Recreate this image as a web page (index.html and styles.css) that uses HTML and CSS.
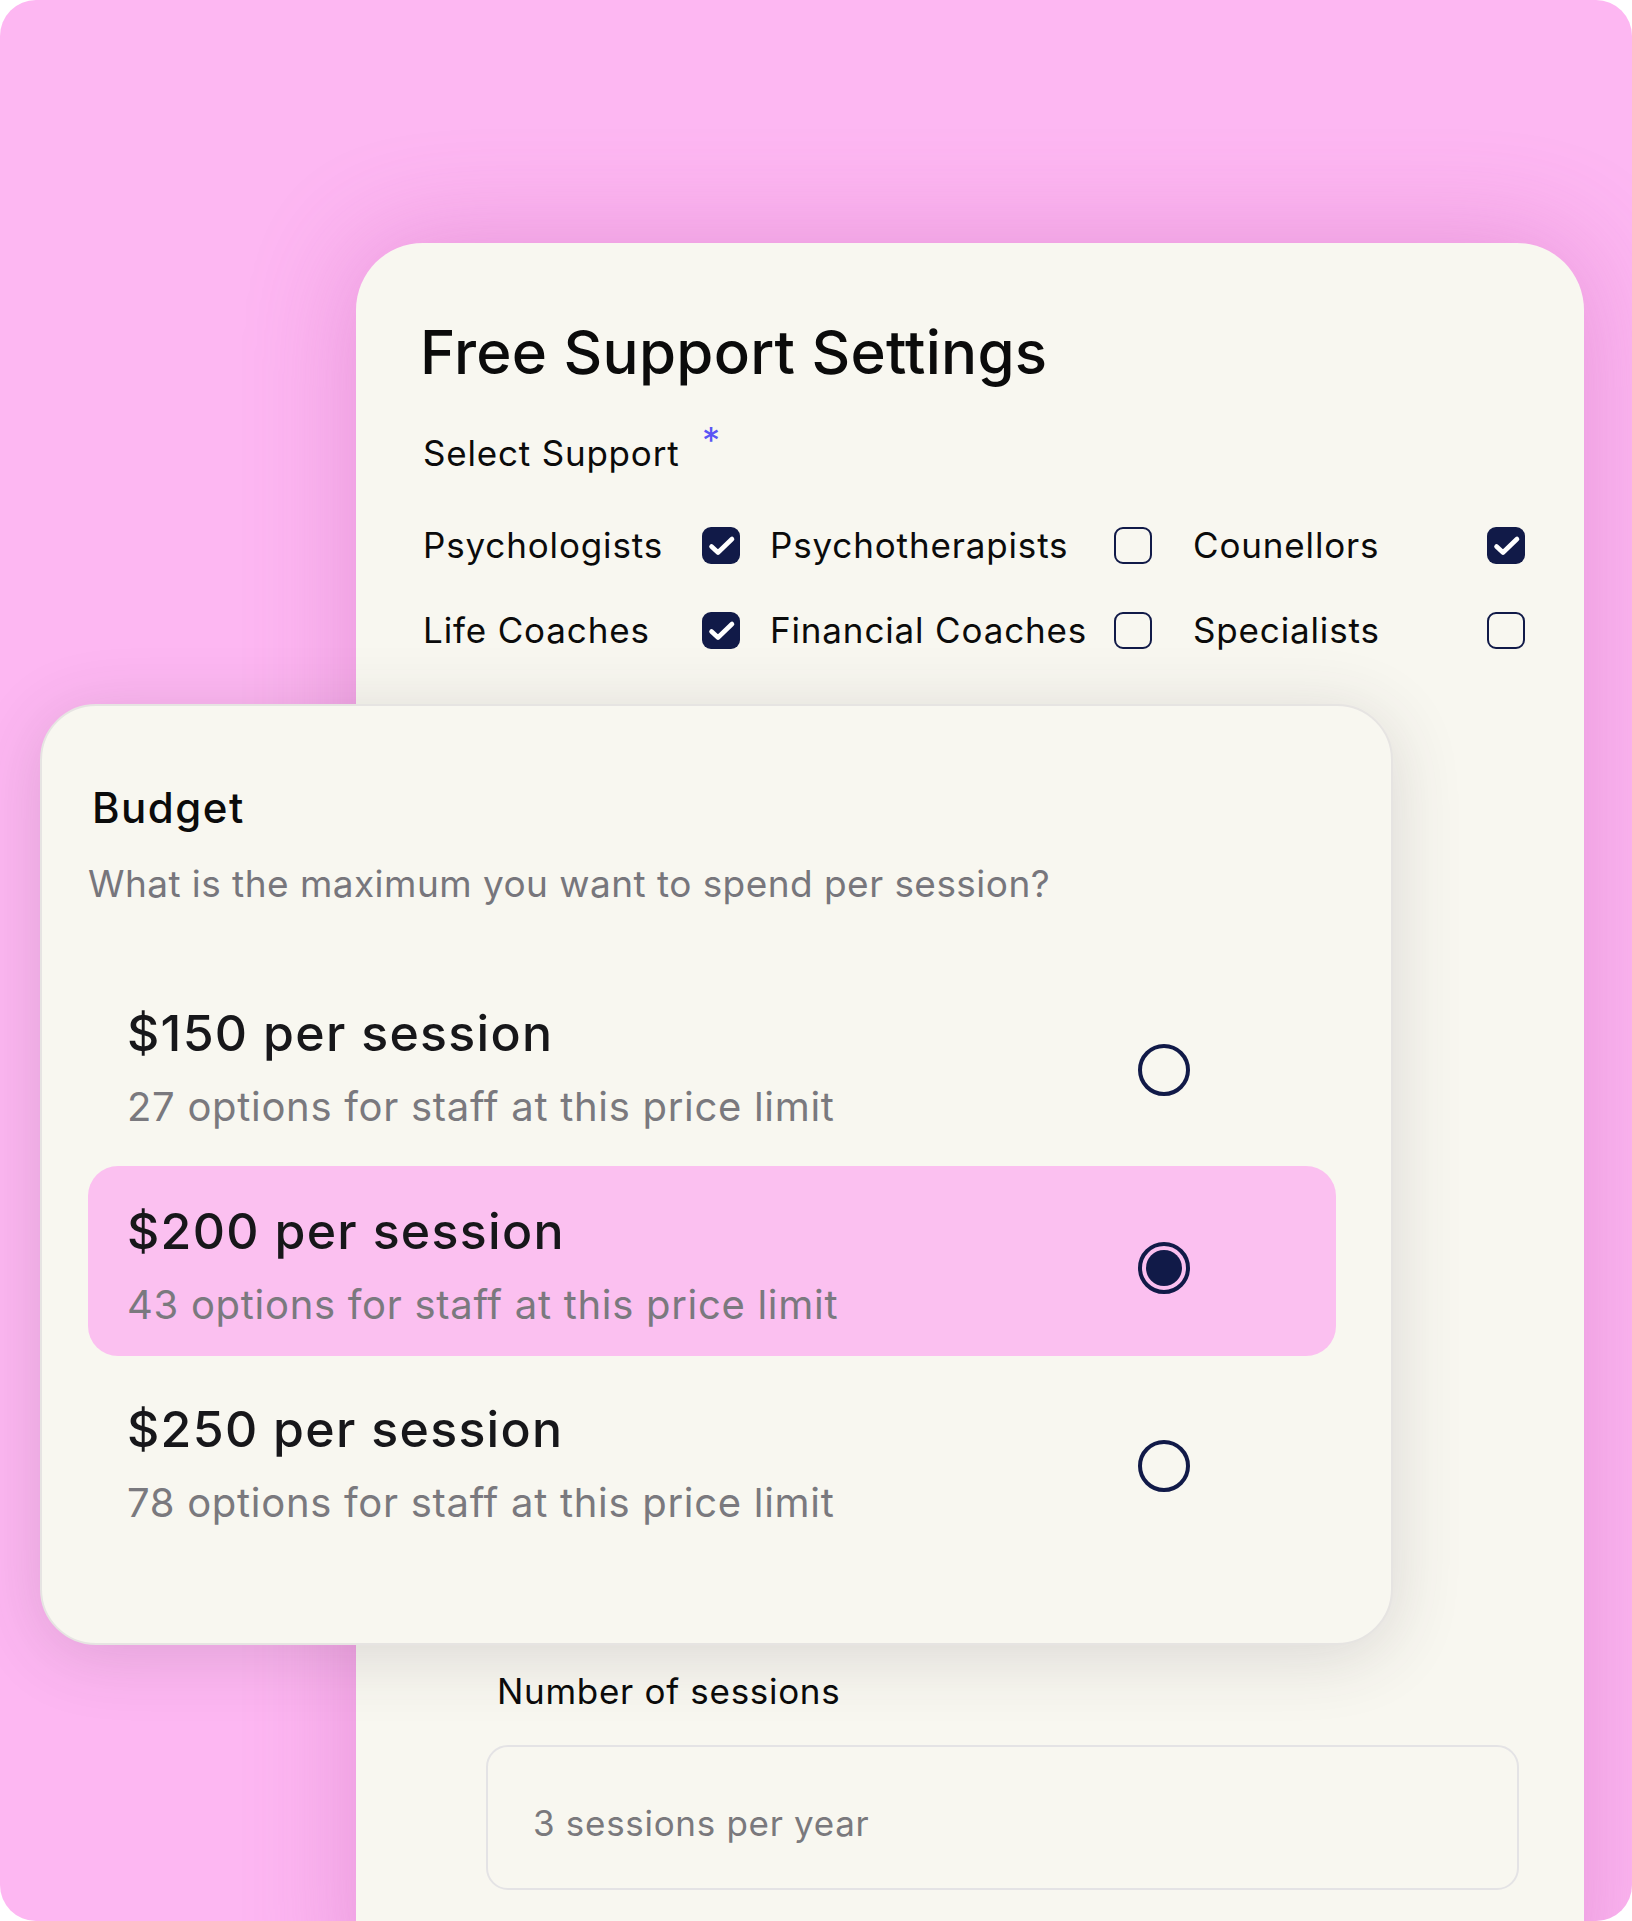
FILE: index.html
```html
<!DOCTYPE html>
<html lang="en">
<head>
    <meta charset="UTF-8">
    <meta name="viewport" content="width=device-width, initial-scale=1.0">
    <title>Free Support Settings</title>
    <link rel="stylesheet" href="styles.css">
</head>
<body>
    <div class="frame">
        <!-- back card: support settings -->
        <section class="settings">
            <h1 class="settings-title">Free Support Settings</h1>
            <div class="field-label">Select Support <span class="req">*</span></div>

            <div class="support-grid">
                <span class="support-name">Psychologists</span>
                <span class="check on"><svg viewBox="0 0 38 37"><path d="M9.5 19.5l6.5 6L30 12"/></svg></span>
                <span class="support-name mid">Psychotherapists</span>
                <span class="check"></span>
                <span class="support-name end">Counellors</span>
                <span class="check on"><svg viewBox="0 0 38 37"><path d="M9.5 19.5l6.5 6L30 12"/></svg></span>

                <span class="support-name">Life Coaches</span>
                <span class="check on"><svg viewBox="0 0 38 37"><path d="M9.5 19.5l6.5 6L30 12"/></svg></span>
                <span class="support-name mid">Financial Coaches</span>
                <span class="check"></span>
                <span class="support-name end">Specialists</span>
                <span class="check"></span>
            </div>

            <div class="sessions">
                <div class="sessions-label">Number of sessions</div>
                <div class="sessions-input">3 sessions per year</div>
            </div>
        </section>

        <!-- front card: budget, lies over the settings card -->
        <section class="budget">
            <h2 class="budget-title">Budget</h2>
            <p class="budget-sub">What is the maximum you want to spend per session?</p>

            <div class="price-list">
                <div class="price">
                    <div class="price-text">
                        <div class="price-name">$150 per session</div>
                        <div class="price-note">27 options for staff at this price limit</div>
                    </div>
                    <span class="radio"></span>
                </div>
                <div class="price selected">
                    <div class="price-text">
                        <div class="price-name">$200 per session</div>
                        <div class="price-note">43 options for staff at this price limit</div>
                    </div>
                    <span class="radio on"></span>
                </div>
                <div class="price">
                    <div class="price-text">
                        <div class="price-name">$250 per session</div>
                        <div class="price-note">78 options for staff at this price limit</div>
                    </div>
                    <span class="radio"></span>
                </div>
            </div>
        </section>
    </div>
</body>
</html>
```

FILE: styles.css
```css
*{
    margin: 0;
    padding: 0;
    box-sizing: border-box;
}
html, body{
    background: #ffffff;
}
body{
    font-family: Inter, "Liberation Sans", sans-serif;
    color: #0b0b0b;
}
.frame{
    position: relative;
    width: 1632px;
    height: 1921px;
    padding: 243px 0 0 356px;
    background: #fdb7f2;
    border-radius: 36px;
    overflow: hidden;
}

/* settings card */
.settings{
    width: 1228px;
    height: 1760px;
    padding: 73px 65px 0 67px;
    background: #f8f7f0;
    border-radius: 67px 67px 0 0;
    box-shadow: 0 0 110px rgba(180, 70, 160, 0.32);
}
.settings-title{
    margin-left: -3px;
    font-size: 60px;
    line-height: 72px;
    font-weight: 500;
    letter-spacing: 0.25px;
}
.field-label{
    margin-top: 45px;
    font-size: 35px;
    line-height: 40px;
    letter-spacing: 0.8px;
}
.req{
    display: inline-block;
    margin-left: 12px;
    color: #5a55f5;
    font-size: 36px;
    line-height: 30px;
    vertical-align: top;
    transform: translateY(-8px);
}
.support-grid{
    display: grid;
    grid-template-columns: 279px 38px 374px 38px 335px 38px;
    grid-auto-rows: 50px;
    row-gap: 35px;
    align-items: center;
    margin-top: 47px;
}
.support-name{
    font-size: 35px;
    line-height: 40px;
    letter-spacing: 0.85px;
}
.support-name.mid{
    padding-left: 30px;
}
.support-name.end{
    padding-left: 41px;
}
.check{
    display: block;
    width: 38px;
    height: 37px;
    border: 2.5px solid #111a48;
    border-radius: 9px;
}
.check.on{
    background: #111a48;
    border: none;
}
.check svg{
    display: block;
    width: 38px;
    height: 37px;
}
.check path{
    fill: none;
    stroke: #ffffff;
    stroke-width: 4.6;
    stroke-linecap: round;
    stroke-linejoin: round;
}
.sessions{
    margin-top: 1016px;
    margin-left: 63px;
}
.sessions-label{
    padding-left: 11px;
    font-size: 35px;
    line-height: 40px;
    letter-spacing: 0.7px;
}
.sessions-input{
    display: flex;
    align-items: center;
    height: 145px;
    margin-top: 34px;
    padding: 11px 0 0 45px;
    border: 2px solid #e4e3e5;
    border-radius: 22px;
    color: #7a797d;
    font-size: 35px;
    line-height: 40px;
    letter-spacing: 0.7px;
}

/* budget card */
.budget{
    position: absolute;
    left: 40px;
    top: 704px;
    width: 1353px;
    height: 941px;
    padding: 77px 55px 0 46px;
    background: #f8f7f0;
    border: 2px solid #e6e4e2;
    border-radius: 56px;
    box-shadow: 0 10px 70px rgba(60, 50, 60, 0.16);
}
.budget-title{
    padding-left: 4px;
    font-size: 42px;
    line-height: 50px;
    font-weight: 500;
    letter-spacing: 1.5px;
}
.budget-sub{
    margin-top: 29px;
    font-size: 37px;
    line-height: 44px;
    color: #77767c;
    letter-spacing: 0.45px;
}
.price-list{
    display: flex;
    flex-direction: column;
    gap: 8px;
    margin-top: 62px;
}
.price{
    display: flex;
    justify-content: space-between;
    align-items: center;
    height: 190px;
    padding: 0 146px 0 39px;
    border-radius: 30px;
}
.price.selected{
    background: #fbc0f0;
}
.price-text{
    align-self: flex-start;
    padding-top: 37px;
}
.price-name{
    font-size: 50px;
    line-height: 56px;
    font-weight: 500;
    color: #17171a;
    letter-spacing: 1.3px;
}
.price-note{
    margin-top: 23px;
    font-size: 40px;
    line-height: 46px;
    color: #7a797e;
    letter-spacing: 0.7px;
}
.radio{
    display: block;
    width: 52px;
    height: 52px;
    margin-top: 14px;
    border: 4px solid #111a48;
    border-radius: 50%;
}
.radio.on{
    padding: 4px;
}
.radio.on::after{
    content: "";
    display: block;
    width: 100%;
    height: 100%;
    background: #111a48;
    border-radius: 50%;
}
```
